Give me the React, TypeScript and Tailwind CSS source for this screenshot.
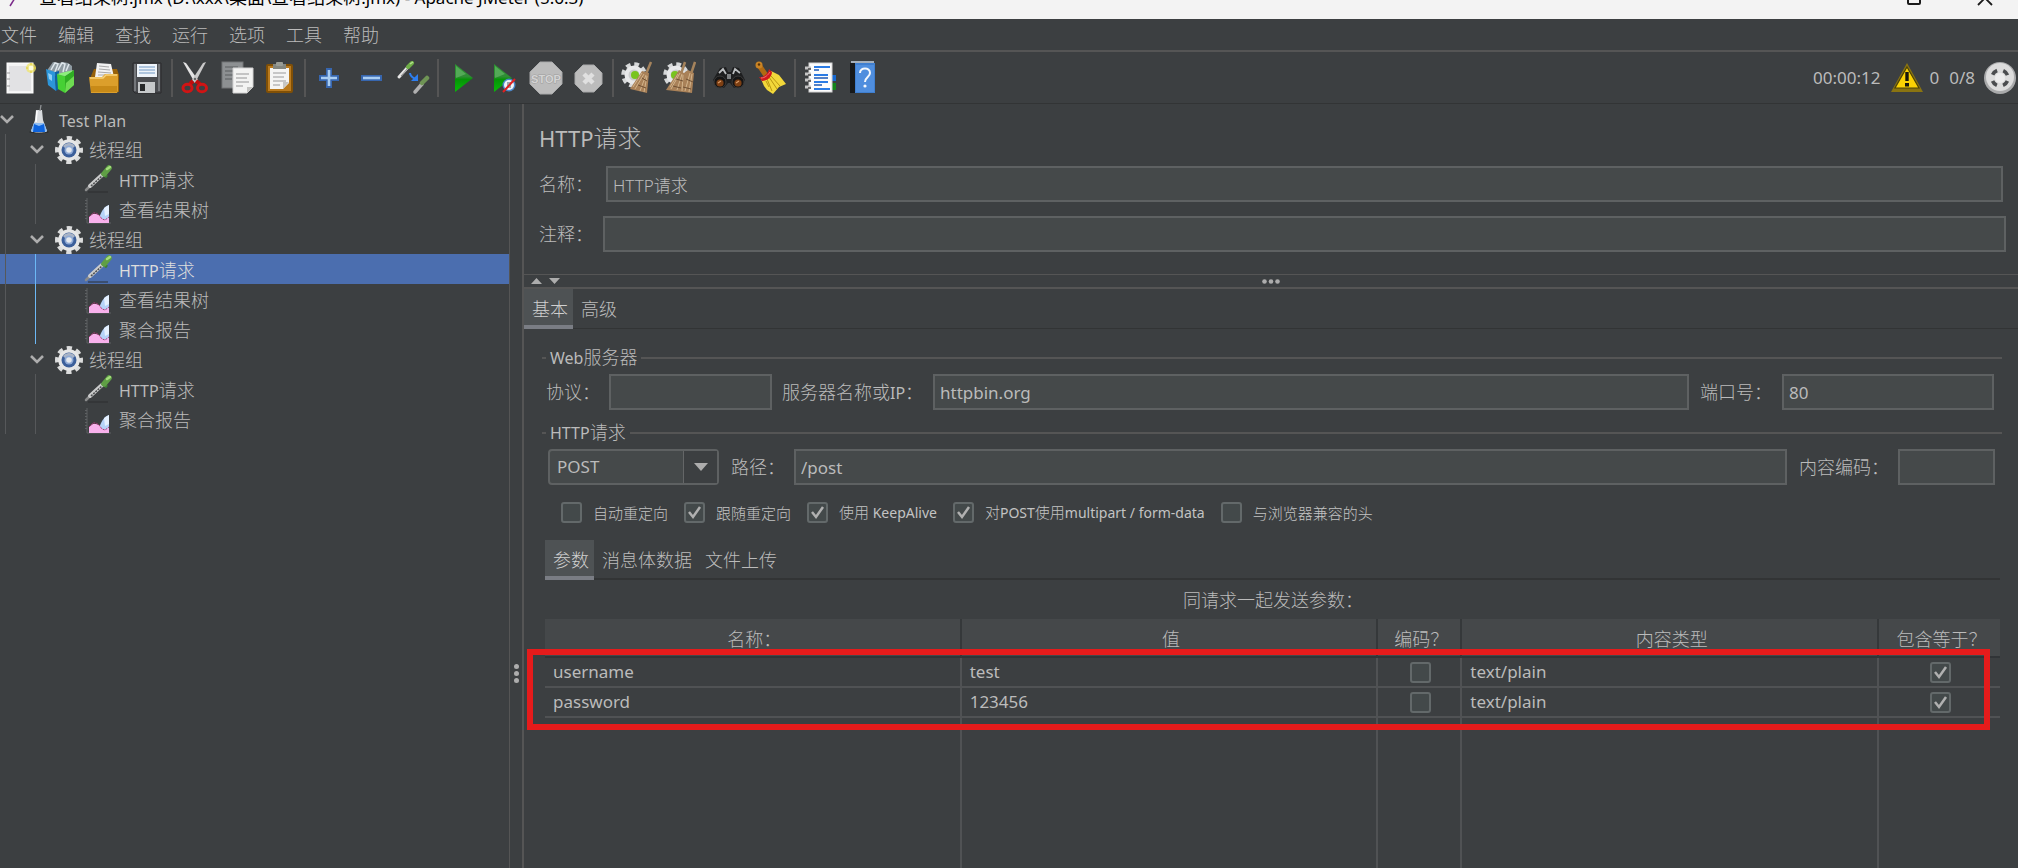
import { Fragment, ReactNode, useState } from 'react';
import clsx from 'clsx';

/* ---------- Toolbar icons ---------- */

function Svg({ children, className = 'w-[34px] h-[34px]', box = '0 0 34 34' }: { children: ReactNode; className?: string; box?: string }) {
  return (
    <svg viewBox={box} className={clsx('shrink-0', className)} fill="none" aria-hidden="true">
      {children}
    </svg>
  );
}

function NewIcon() {
  return (
    <Svg>
      <rect x="3" y="2" width="26" height="30" fill="#f4f4f4" stroke="#ffffff" />
      <rect x="5" y="5" width="22" height="25" fill="#e2e2e4" />
      <path d="M3 12h3M3 18h3M3 25h3" stroke="#9b9b9b" strokeWidth="1" />
      <circle cx="27" cy="7" r="5" fill="#f0e56a" opacity=".75" />
      <path d="M27 2v10M22 7h10" stroke="#e3cf35" strokeWidth="1" />
      <circle cx="27" cy="7" r="2.500" fill="#fffde0" />
    </Svg>
  );
}

function TemplatesIcon() {
  return (
    <Svg>
      <path d="M2 8l5-7 6 1 4-1 5 1 4 3v11L2 14z" fill="#8f9ba2" />
      <path d="M5 9l4-7 3 1-3 8M12 9l4-7 3 1-2 8M20 10l3-7" stroke="#dfe7ec" strokeWidth="1.500" />
      <path d="M0 8l9 3 1 19-8-6z" fill="#2c96da" />
      <path d="M2 12l4 2v6l-3-2z" fill="#8fd0f7" />
      <path d="M9 11l4-1v18l-3 2z" fill="#0e62a3" />
      <path d="M11 13l8 2v17l-7-4z" fill="#46d034" />
      <path d="M19 15l9-6v15l-9 8z" fill="#2fae23" />
      <path d="M20 22l8-7v9l-9 8z" fill="#6edc52" />
      <path d="M11 13l8-2 9-2-9 6z" fill="#8df07c" />
    </Svg>
  );
}

function OpenIcon() {
  return (
    <Svg>
      <path d="M3 15l3-7h23l2 6v17H3z" fill="#96610a" />
      <path d="M7 16L9 2l14 1 3 13z" fill="#f2f2f2" />
      <path d="M11 5l10 1M11 8l11 1M10 11l13 1M10 14h14" stroke="#a8a8a8" strokeWidth="1.200" />
      <path d="M1 16h13l3-3h13v17l-1 2H3z" fill="#dc9f2b" />
      <path d="M2 17h13l3-3h11" stroke="#f7d37a" strokeWidth="1.400" />
      <path d="M3 25h26v6H3z" fill="#c88a17" />
    </Svg>
  );
}

function SaveIcon() {
  return (
    <Svg>
      <path d="M3 2h28v30H5l-2-2z" fill="#4a4c50" stroke="#2a2b2d" />
      <path d="M4 3h2v27H4zM28 3h2v27h-2z" fill="#74777b" />
      <rect x="7" y="3" width="20" height="13" fill="#eef4fa" />
      <path d="M9 6h16M9 9h16M9 12h16" stroke="#9ab6d6" strokeWidth="1.600" />
      <rect x="8" y="21" width="17" height="11" fill="#c6c9cb" />
      <rect x="10" y="23" width="5" height="7" fill="#26282a" />
    </Svg>
  );
}

function CutIcon() {
  return (
    <Svg>
      <path d="M4 1l3 1 12 17-3 3z" fill="#e3e3e3" />
      <path d="M27 1l-3 1-11 17 3 3z" fill="#c9c9c9" />
      <path d="M14 20l-3 3M17 20l4 3" stroke="#c00c0c" strokeWidth="4" />
      <ellipse cx="8.500" cy="27" rx="4.500" ry="3.800" stroke="#d01414" strokeWidth="3" />
      <ellipse cx="23" cy="27" rx="4.500" ry="3.800" stroke="#d01414" strokeWidth="3" />
      <circle cx="16" cy="18" r="1.200" fill="#666" />
    </Svg>
  );
}

function CopyIcon() {
  return (
    <Svg>
      <rect x="1" y="1" width="21" height="26" fill="#8d9092" stroke="#727577" />
      <path d="M4 6h13M4 10h13M4 14h9M4 18h7" stroke="#6b6e70" strokeWidth="1.600" />
      <path d="M12 7h20v19l-6 6H12z" fill="#f3f3f2" stroke="#d2d2d2" />
      <path d="M15 13h13M15 17h11M15 21h13M15 25h7" stroke="#b5b5b5" strokeWidth="1.600" />
      <path d="M32 26h-6v6z" fill="#c2c2c0" />
    </Svg>
  );
}

function PasteIcon() {
  return (
    <Svg>
      <rect x="4" y="4" width="25" height="27" rx="1" fill="#b97a1e" stroke="#815006" strokeWidth="2" />
      <path d="M7 7h19v15l-6 6H7z" fill="#f5f5f4" />
      <path d="M10 12h13M10 16h11M10 20h13M10 24h7" stroke="#b8b8b8" strokeWidth="1.500" />
      <path d="M26 21h-6v7z" fill="#c6c6c4" />
      <rect x="10" y="3" width="13" height="5" fill="#83867f" />
      <rect x="13" y="1" width="7" height="4" rx="1" fill="#999c95" />
    </Svg>
  );
}

function PlusIcon() {
  return (
    <Svg>
      <path d="M14 7h6v7h7v6h-7v7h-6v-7H7v-6h7z" fill="#3766ae" />
      <path d="M17 9v16M9 17h16" stroke="#a9cdf2" strokeWidth="2.600" />
    </Svg>
  );
}

function MinusIcon() {
  return (
    <Svg>
      <path d="M7 14h21v6H7z" fill="#3766ae" />
      <path d="M9 17h17" stroke="#a9cdf2" strokeWidth="2.600" />
    </Svg>
  );
}

function ToggleIcon() {
  return (
    <Svg>
      <path d="M3 16L12 6" stroke="#e6e6e6" strokeWidth="3" strokeLinecap="round" />
      <path d="M5 15L12 7" stroke="#888" strokeWidth="1" />
      <path d="M12 6l4-4" stroke="#6fae47" strokeWidth="4" strokeLinecap="round" />
      <path d="M14 3l3-2" stroke="#b4e08f" strokeWidth="1.500" />
      <path d="M14 12c0 3 2 4 5 6" stroke="#2d7ef0" strokeWidth="2" />
      <path d="M22 13v7h-7z" fill="#2d7ef0" />
      <path d="M19 31l7-8" stroke="#b0b0b0" strokeWidth="3.500" strokeLinecap="round" />
      <path d="M26 22l5-5" stroke="#6f9455" strokeWidth="4.500" strokeLinecap="round" />
    </Svg>
  );
}

function RunShape() {
  return (
    <>
      <defs>
        <linearGradient id="runFill" x1="0" y1="0" x2="0" y2="1">
          <stop offset="0" stopColor="#2c9130" />
          <stop offset=".45" stopColor="#2f8d35" />
          <stop offset=".55" stopColor="#069307" />
          <stop offset="1" stopColor="#08bb08" />
        </linearGradient>
      </defs>
      <path d="M10 3l18 14-18 14z" fill="url(#runFill)" />
      <path d="M11 5l10 8-10 4z" fill="#8bd18d" opacity=".4" />
    </>
  );
}

function RunIcon() {
  return (
    <Svg>
      <RunShape />
    </Svg>
  );
}

function RunNoPauseIcon() {
  return (
    <Svg>
      <g transform="translate(-3 0)">
        <RunShape />
      </g>
      <circle cx="22" cy="24" r="6.500" fill="#4b86c8" />
      <circle cx="22" cy="24" r="5" fill="#eef3f8" />
      <path d="M20 21h4v6h-4z" fill="#9aa4ad" />
      <path d="M16 31l12-13" stroke="#e02020" strokeWidth="2" />
    </Svg>
  );
}

function StopIcon() {
  return (
    <Svg>
      <path d="M11 1h12l10 10v12L23 33H11L1 23V11z" fill="#bcbcbc" stroke="#a8a9aa" />
      <text x="17" y="22" textAnchor="middle" fontSize="11" fontWeight="700" fontFamily="Liberation Sans" fill="#d4d4d4" stroke="#9c9c9c" strokeWidth="1" paintOrder="stroke">
        STOP
      </text>
    </Svg>
  );
}

function ShutdownIcon() {
  return (
    <Svg>
      <path d="M12 4h11l8 8v11l-8 8H12l-8-8V12z" fill="#bcbcbc" stroke="#a8a9aa" />
      <path d="M13 13l9 9M22 13l-9 9" stroke="#e0e0e0" strokeWidth="4.500" />
    </Svg>
  );
}

function MiniGear({ dot }: { dot: number }) {
  return (
    <>
      <circle cx="14" cy="14" r="10.500" stroke="#d6d8d9" strokeWidth="4.500" strokeDasharray="4.600 3.640" />
      <circle cx="14" cy="14" r="9.500" fill="#e8e9ea" />
      <circle cx="14" cy="14" r="5.500" fill="#c9cbcc" />
      <circle cx={dot} cy="14" r="4" fill="#79c41f" />
    </>
  );
}

function ClearIcon() {
  return (
    <Svg>
      <MiniGear dot={15} />
      <path d="M31 1l-5 12" stroke="#a5835c" strokeWidth="2.500" />
      <path d="M22 10l7 2-2 20-17-4z" fill="#a98158" />
      <path d="M24 13l-9 15M26 14l-6 16M27 15l-3 16M22 12l-9 14" stroke="#d2b48c" strokeWidth="1" />
      <path d="M22 17l5 3M18 24l8 3" stroke="#6f5033" strokeWidth="1" />
    </Svg>
  );
}

function ClearAllIcon() {
  return (
    <Svg>
      <MiniGear dot={13} />
      <path d="M23 1l-4 12M33 1l-4 12" stroke="#a5835c" strokeWidth="2.500" />
      <path d="M17 9l5 3 4-3 6 3-2 20-26-3z" fill="#a98158" />
      <path d="M18 12l-9 16M20 13l-5 16M21 14l-1 16M28 12l-5 18M30 13l-3 18M16 13l-8 13" stroke="#d2b48c" strokeWidth="1" />
      <path d="M14 18l7 2M24 18l7 3M11 25l8 2M21 26l8 2" stroke="#6f5033" strokeWidth="1" />
    </Svg>
  );
}

function SearchIcon() {
  return (
    <Svg>
      <path d="M2 19L9 7l6-1 2 5h3l2-5 6 1 6 12-4 6-7 2-4-5h-2l-4 5-7-2z" fill="#1d1e1f" />
      <path d="M8 12l4-4 3 5M22 13l2-5 5 4" stroke="#b9bcbe" strokeWidth="1.800" />
      <circle cx="9" cy="21" r="6" fill="#151515" stroke="#3a3a3a" />
      <circle cx="27" cy="21" r="6" fill="#151515" stroke="#3a3a3a" />
      <circle cx="9" cy="22" r="3.600" fill="#7d3f13" />
      <circle cx="27" cy="22" r="3.600" fill="#7d3f13" />
      <path d="M7 22l3-2M25 22l3-2" stroke="#d99b68" strokeWidth="1.200" />
      <path d="M16 13h4v5h-4z" fill="#7d8082" />
    </Svg>
  );
}

function BroomIcon() {
  return (
    <Svg>
      <path d="M6 4l6 9" stroke="#b06a12" strokeWidth="5" strokeLinecap="round" />
      <circle cx="6" cy="4" r="3.500" fill="#c98324" />
      <circle cx="6" cy="3.500" r="1.200" fill="#5a3303" />
      <path d="M8 18l10-8 8 4 7 9-7 3-6 7-6-4-3-4z" fill="#f2d83a" />
      <path d="M14 18l5 12M18 15l9 10M13 20l3 6M16 16l8 12" stroke="#b89611" strokeWidth="1" />
      <path d="M6 16c4 1 9-3 10-8l3 3c0 5-5 9-10 9z" fill="#d0191c" />
      <path d="M8 17c4 0 7-3 9-6" stroke="#f07070" strokeWidth="1" />
    </Svg>
  );
}

function FunctionHelperIcon() {
  return (
    <Svg>
      <path d="M28 14h6v6h-6z" fill="#1769d2" />
      <path d="M28 22h6v7h-6z" fill="#12851b" />
      <rect x="7" y="2" width="23" height="29" fill="#fcfcfc" stroke="#d3d3d3" />
      <path d="M3 7h6M3 13h6M3 19h6M3 26h6" stroke="#c5c5c5" strokeWidth="3" />
      <path d="M6 8h3M6 14h3M6 20h3M6 27h3" stroke="#444" strokeWidth="1.500" />
      <path d="M12 6h16M12 14h14M12 21h14M12 28h16" stroke="#2b7be4" strokeWidth="2" />
      <path d="M12 9h5M12 17h14M12 24h8" stroke="#1c58b4" strokeWidth="1.500" />
    </Svg>
  );
}

function HelpIcon() {
  return (
    <Svg>
      <path d="M7 2h24v30H7z" fill="#3f7fd0" />
      <path d="M12 4h18v27H12z" fill="#4f8ede" />
      <path d="M6 2h5v30H6z" fill="#17191b" />
      <path d="M7 1h23" stroke="#c9d7e6" strokeWidth="1.500" />
      <path d="M16 12c0-6 10-6 10 0 0 4-5 4-5 9" stroke="#f4f8fd" strokeWidth="2" />
      <circle cx="21" cy="25" r="1.600" fill="#f4f8fd" />
    </Svg>
  );
}

function WarningIcon() {
  return (
    <Svg>
      <path d="M17 2l16 29H1z" fill="#8a7411" />
      <path d="M17 6l12 21H5z" fill="#fbd204" stroke="#4c4208" strokeWidth="1.200" />
      <path d="M17 11v9" stroke="#17160c" strokeWidth="3.400" />
      <rect x="15" y="22" width="4" height="3.500" fill="#17160c" />
    </Svg>
  );
}

function StatusIcon() {
  return (
    <Svg>
      <circle cx="17" cy="17" r="16" fill="#a9aaab" />
      <circle cx="17" cy="16" r="14" fill="#dcdcdc" />
      {/* four dashes, one on each diagonal */}
      <circle cx="17" cy="17" r="8" stroke="#4a4c4e" strokeWidth="3.600" strokeDasharray="6.283 6.283" strokeDashoffset="-3.100" />
      <circle cx="17" cy="17" r="5" fill="#ececec" />
    </Svg>
  );
}

/* ---------- Tree icons ---------- */

function FlaskIcon() {
  return (
    <Svg box="0 0 30 30" className="w-[30px] h-[30px]">
      <ellipse cx="15" cy="27" rx="10" ry="1.500" fill="#2b2d2f" />
      <path d="M12 5h6l1 10 4 11c0 2-16 2-16 0l4-11z" fill="#d9dcdf" />
      <path d="M10 18h10l3 8c0 1.500-16 1.500-16 0z" fill="#8fbdf2" />
      <path d="M10 19l5 2 5-2 1 8H9z" fill="#0d63dd" />
      <path d="M13 6l-1 11" stroke="#fff" strokeWidth="1.500" />
      <path d="M17 0l-1 6" stroke="#8f9294" strokeWidth="1.300" />
    </Svg>
  );
}

function GearIcon() {
  return (
    <Svg box="0 0 30 30" className="w-[30px] h-[30px]">
      <circle cx="15" cy="15" r="11.500" stroke="#dcdddd" strokeWidth="5" strokeDasharray="5 4.032" strokeDashoffset="2.500" />
      <circle cx="15" cy="15" r="10.800" fill="#e6e6e6" />
      <circle cx="15" cy="15" r="7.500" fill="#3c5f9a" />
      <path d="M9 11a7.500 7.500 0 0 1 12 0l-3 3h-6z" fill="#a9b4c6" />
      <circle cx="15" cy="15" r="4.500" fill="#8fa9d4" />
      <circle cx="15" cy="15" r="2.800" fill="#e4e8ee" />
    </Svg>
  );
}

function DropperIcon() {
  return (
    <Svg box="0 0 30 30" className="w-[30px] h-[30px]">
      <path d="M4 27h20" stroke="#2c2e30" />
      <path d="M2 25l5-5" stroke="#8a8b8b" strokeWidth="2.500" strokeLinecap="round" />
      <path d="M6 21L18 10" stroke="#cbcccc" strokeWidth="4" strokeLinecap="round" />
      <path d="M7 21L18 11" stroke="#4d4f50" strokeWidth="1.500" strokeDasharray="2 1" />
      <path d="M18 8l5 4" stroke="#3e7d34" strokeWidth="3" />
      <path d="M20 9l5-6" stroke="#5f9f45" strokeWidth="5.500" strokeLinecap="round" />
      <path d="M23 4l3-2" stroke="#a4dc7c" strokeWidth="2.500" strokeLinecap="round" />
    </Svg>
  );
}

function ChartIcon() {
  return (
    <Svg box="0 0 30 30" className="w-[30px] h-[30px]">
      <path d="M3 3v25h24" stroke="#5d6062" strokeWidth="1" />
      <path d="M2 5v20" stroke="#5d6062" strokeWidth="2" strokeDasharray="1 2" />
      <path d="M14 27c2-9 6-16 11-17v17z" fill="#b6d3f8" />
      <path d="M20 13l5-3v9l-4 2z" fill="#e6f1ff" />
      <path d="M5 28v-6l4-3h3l3 1 3 4 3 1 4-2v5z" fill="#f8b1ec" />
      <path d="M5 22l4-4h3l3 2 3 4 3 1 4-3" stroke="#b03a78" strokeWidth="1" strokeDasharray="2 1" />
    </Svg>
  );
}

/* ---------- Small shared parts ---------- */

const latinSize = {
  sm: 'text-[14px]',
  base: 'text-[16px]',
  md: 'text-[17px]',
  lg: 'text-[22px]',
};

// Latin runs are set a little smaller than the Chinese around them
function Mixed({ text, size = 'base' }: { text: string; size?: keyof typeof latinSize }) {
  return (
    <>
      {text.split(/([\x20-\x7e]+)/).map((part, i) =>
        i % 2 === 1 ? (
          <span key={i} className={clsx('whitespace-pre font-normal', latinSize[size])}>
            {part}
          </span>
        ) : (
          <Fragment key={i}>{part}</Fragment>
        )
      )}
    </>
  );
}

function CheckBox({ id, label, checked }: { id?: string; label?: string; checked: boolean }) {
  const [on, setOn] = useState(checked);
  return (
    <span className="relative inline-block w-[21px] h-[21px] shrink-0 align-middle">
      <input
        id={id}
        aria-label={label}
        type="checkbox"
        checked={on}
        onChange={() => setOn(!on)}
        className="block appearance-none w-full h-full bg-[#43494a] border-2 border-[#63696a] rounded-[3px]"
      />
      {on && (
        <svg viewBox="0 0 21 21" className="absolute inset-0 pointer-events-none" fill="none" aria-hidden="true">
          <path d="M5 10l4 5 7-10" stroke="#b0b0b0" strokeWidth="2.500" />
        </svg>
      )}
    </span>
  );
}

function Tabs({ items, line }: { items: string[]; line: string }) {
  const [active, setActive] = useState(0);
  return (
    <div role="tablist" className={clsx('flex h-10', line)}>
      {items.map((item, i) => (
        <button
          key={item}
          role="tab"
          aria-selected={i === active}
          onClick={() => setActive(i)}
          className={clsx(
            'h-10 pl-2 pr-[5px] pt-1 border-b-4 text-[18px] leading-6',
            i === active ? 'bg-[#4e5254] border-[#7a7d84] text-[#d0d0d0]' : 'border-transparent'
          )}
        >
          {item}
        </button>
      ))}
    </div>
  );
}

function GroupTitle({ text }: { text: string }) {
  return (
    <div className="flex items-center pl-[18px] pr-4 text-[18px] leading-6">
      <span className="w-1 h-0.5 bg-[#555555] mr-1" />
      <h2>
        <Mixed text={text} />
      </h2>
      <span className="flex-1 h-0.5 bg-[#555555] ml-1" />
    </div>
  );
}

const field = 'h-9 min-w-0 bg-[#45494a] border-2 border-[#5e6162] px-[5px] outline-none focus:border-[#466d94]';

/* ---------- Test plan tree ---------- */

type TreeRow = { name: string; depth: number; icon: () => ReactNode; open?: boolean; selected?: boolean; active?: boolean };

const treeRows: TreeRow[] = [
  { name: 'Test Plan', depth: 0, icon: FlaskIcon, open: true },
  { name: '线程组', depth: 1, icon: GearIcon, open: true },
  { name: 'HTTP请求', depth: 2, icon: DropperIcon },
  { name: '查看结果树', depth: 2, icon: ChartIcon },
  { name: '线程组', depth: 1, icon: GearIcon, open: true },
  { name: 'HTTP请求', depth: 2, icon: DropperIcon, selected: true, active: true },
  { name: '查看结果树', depth: 2, icon: ChartIcon, active: true },
  { name: '聚合报告', depth: 2, icon: ChartIcon, active: true },
  { name: '线程组', depth: 1, icon: GearIcon, open: true },
  { name: 'HTTP请求', depth: 2, icon: DropperIcon },
  { name: '聚合报告', depth: 2, icon: ChartIcon },
];

function Tree() {
  return (
    <ul className="w-[510px] shrink-0 border-r border-[#555555]">
      {treeRows.map((row, i) => {
        const Icon = row.icon;
        return (
          <li key={i} className={clsx('flex h-[30px]', row.selected && 'bg-[#4b6eaf] text-[#dddddd]')}>
            {Array.from({ length: row.depth }, (_, level) => (
              <span key={level} className="w-[30px] h-full pl-[5px] shrink-0">
                <span className={clsx('block h-full border-l', row.active && level === 1 ? 'border-[#6cb8f5]' : 'border-[#56585a]')} />
              </span>
            ))}
            <div className="flex items-center pt-0.5">
              <span className="w-6 shrink-0">
                {row.open && (
                  <svg viewBox="0 0 14 10" className="w-[14px] h-[10px]" fill="none" aria-hidden="true">
                    <path d="M1 1l6 6 6-6" stroke="#adadad" strokeWidth="2.600" />
                  </svg>
                )}
              </span>
              <Icon />
              <span className="pl-[5px] leading-[30px]">
                <Mixed text={row.name} />
              </span>
            </div>
          </li>
        );
      })}
    </ul>
  );
}

/* ---------- Header bars ---------- */

const menus = ['文件', '编辑', '查找', '运行', '选项', '工具', '帮助'];

const toolGroups: { label: string; icon: () => ReactNode }[][] = [
  [
    { label: '新建', icon: NewIcon },
    { label: '模板', icon: TemplatesIcon },
    { label: '打开', icon: OpenIcon },
    { label: '保存', icon: SaveIcon },
  ],
  [
    { label: '剪切', icon: CutIcon },
    { label: '复制', icon: CopyIcon },
    { label: '粘贴', icon: PasteIcon },
  ],
  [
    { label: '全部展开', icon: PlusIcon },
    { label: '全部折叠', icon: MinusIcon },
    { label: '切换', icon: ToggleIcon },
  ],
  [
    { label: '启动', icon: RunIcon },
    { label: '不停顿开始', icon: RunNoPauseIcon },
    { label: '停止', icon: StopIcon },
    { label: '关闭', icon: ShutdownIcon },
  ],
  [
    { label: '清除', icon: ClearIcon },
    { label: '清除全部', icon: ClearAllIcon },
  ],
  [
    { label: '查找', icon: SearchIcon },
    { label: '重置查找', icon: BroomIcon },
  ],
  [
    { label: '函数助手对话框', icon: FunctionHelperIcon },
    { label: '帮助', icon: HelpIcon },
  ],
];

function TitleBar() {
  return (
    <header className="h-[19px] shrink-0 overflow-hidden bg-[#f3f3f3] text-black">
      <div className="-mt-6 h-[43px] flex items-center pl-2 pr-[25px]">
        <svg viewBox="0 0 20 34" className="w-5 h-[34px]" fill="none" aria-hidden="true">
          <path d="M5 18C7 12 11 7 18 1c0 8-5 13-11 17" fill="#b0348f" />
          <path d="M2 25l5-8" stroke="#7a2a8a" strokeWidth="1.500" />
        </svg>
        <h1 className="flex-1 pl-[11px] text-[18px] leading-6 font-normal">
          <Mixed text="查看结果树.jmx (D:\xxx\桌面\查看结果树.jmx) - Apache JMeter (5.6.3)" size="md" />
        </h1>
        <button aria-label="最大化" className="w-[14px] h-[14px] border-2 border-[#1a1a1a] rounded-[2px]" />
        <button aria-label="关闭" className="ml-14">
          <svg viewBox="0 0 16 16" className="w-4 h-4" fill="none" aria-hidden="true">
            <path d="M1 1l14 14M15 1L1 15" stroke="#1a1a1a" strokeWidth="1.800" />
          </svg>
        </button>
      </div>
    </header>
  );
}

function Toolbar() {
  return (
    <div className="flex items-center h-[52px] shrink-0 border-b border-[#323435]">
      {toolGroups.map((group, g) => (
        <Fragment key={g}>
          {g > 0 && <span className="w-0.5 h-[38px] ml-[3px] mr-0.5 bg-[#555555]" />}
          {group.map(({ label, icon: Icon }) => (
            <button key={label} aria-label={label} className="w-[42px] h-[42px] flex items-center justify-center hover:bg-[#4c5052]">
              <Icon />
            </button>
          ))}
        </Fragment>
      ))}
      <div className="ml-auto flex items-center text-[17px] leading-6 font-normal pr-px">
        <span>00:00:12</span>
        <span className="ml-2.5 mr-[5px]">
          <WarningIcon />
        </span>
        <span>0</span>
        <span className="ml-2.5 mr-2">0/8</span>
        <StatusIcon />
      </div>
    </div>
  );
}

/* ---------- HTTP sampler form ---------- */

const options = [
  { id: 'auto-redirect', label: '自动重定向', checked: false },
  { id: 'follow-redirect', label: '跟随重定向', checked: true },
  { id: 'keep-alive', label: '使用 KeepAlive', checked: true },
  { id: 'multipart', label: '对POST使用multipart / form-data', checked: true },
  { id: 'browser-headers', label: '与浏览器兼容的头', checked: false },
];

const params = [
  { name: 'username', value: 'test', encode: false, type: 'text/plain', equals: true },
  { name: 'password', value: '123456', encode: false, type: 'text/plain', equals: true },
];

function ParamsTable() {
  const cell = 'border-r-2 border-b-2 border-[#505254] px-2 py-0';
  const empty = 'border-r-2 border-[#505254] p-0';
  const head = 'border-r-2 border-b-2 border-r-[#35383a] border-b-[#313437] p-0 pt-0.5 pl-1 font-light';
  return (
    <div className="flex-1 min-h-0 relative mt-[7px] pl-[21px] pr-[18px]">
      <table className="w-full h-full table-fixed border-separate border-spacing-0 text-left text-[17px] font-normal">
        <colgroup>
          <col />
          <col />
          <col className="w-[84px]" />
          <col />
          <col className="w-[121px]" />
        </colgroup>
        <thead>
          <tr className="h-[39px] bg-[#45484a] text-center text-[18px] leading-6">
            <th className={head}>名称：</th>
            <th className={head}>值</th>
            <th className={head}>编码？</th>
            <th className={head}>内容类型</th>
            <th className="border-b-2 border-b-[#313437] p-0 pt-0.5 pl-1 font-light">包含等于？</th>
          </tr>
        </thead>
        <tbody>
          {params.map((p) => (
            <tr key={p.name} className="h-[30px] leading-6">
              <td className={cell}>{p.name}</td>
              <td className={cell}>{p.value}</td>
              <td className="border-r-2 border-b-2 border-[#505254] p-0 pl-0.5 text-center leading-none">
                <CheckBox label={p.name + ' 编码？'} checked={p.encode} />
              </td>
              <td className={cell}>{p.type}</td>
              <td className="border-b-2 border-[#505254] p-0 pl-0.5 text-center leading-none">
                <CheckBox label={p.name + ' 包含等于？'} checked={p.equals} />
              </td>
            </tr>
          ))}
          <tr>
            <td className={empty} />
            <td className={empty} />
            <td className={empty} />
            <td className={empty} />
            <td />
          </tr>
        </tbody>
      </table>
      {/* highlight around the parameter rows */}
      <div className="absolute left-[3px] right-[28px] top-[30px] h-[81px] border-[6px] border-[#e61b1b] pointer-events-none" />
    </div>
  );
}

function SamplerPanel() {
  return (
    <main className="flex-1 min-w-0 flex flex-col border-l-2 border-[#555555] text-[18px] leading-6">
      <h1 className="pt-[18px] pl-[15px] text-[24px] leading-8">
        <Mixed text="HTTP请求" size="lg" />
      </h1>
      <div className="flex items-center mt-3 pl-[15px] pr-[15px]">
        <label htmlFor="name" className="w-[67px] shrink-0">名称：</label>
        <input id="name" defaultValue="HTTP请求" className={clsx(field, 'flex-1 text-[17px]')} />
      </div>
      <div className="flex items-center mt-[14px] pl-[15px] pr-3">
        <label htmlFor="comment" className="w-16 shrink-0">注释：</label>
        <input id="comment" className={clsx(field, 'flex-1')} />
      </div>

      <div className="mt-[22px] h-[15px] shrink-0 border-t border-b-2 border-[#555555] grid grid-cols-3 items-center">
        <svg viewBox="0 0 30 6" className="w-[30px] h-[6px] ml-[7px]" aria-hidden="true">
          <path d="M0 6l5.500-6L11 6zM18 0h11l-5.500 6z" fill="#adadad" />
        </svg>
        <svg viewBox="0 0 18 5" className="w-[18px] h-[5px] justify-self-center" aria-hidden="true">
          <circle cx="2.500" cy="2.500" r="2.300" fill="#adadad" />
          <circle cx="9" cy="2.500" r="2.300" fill="#adadad" />
          <circle cx="15.500" cy="2.500" r="2.300" fill="#adadad" />
        </svg>
      </div>

      <Tabs items={['基本', '高级']} line="shadow-[inset_0_-1px_#323435]" />

      <div className="mt-4">
        <GroupTitle text="Web服务器" />
        <div className="flex items-center mt-1 pl-[22px] pr-6">
          <label htmlFor="protocol" className="w-[63px] shrink-0">协议：</label>
          <input id="protocol" className={clsx(field, 'w-[163px]')} />
          <label htmlFor="server" className="w-[151px] ml-2.5 shrink-0">
            <Mixed text="服务器名称或IP：" />
          </label>
          <input id="server" defaultValue="httpbin.org" className={clsx(field, 'flex-1 text-[17px] font-normal')} />
          <label htmlFor="port" className="w-[82px] ml-[11px] shrink-0">端口号：</label>
          <input id="port" defaultValue="80" className={clsx(field, 'w-[212px] text-[17px] font-normal')} />
        </div>
      </div>

      <div className="mt-2.5">
        <GroupTitle text="HTTP请求" />
        <div className="flex items-center mt-1 pl-6 pr-[23px]">
          <div className="relative w-[171px] h-9 shrink-0">
            <select
              aria-label="方法"
              defaultValue="POST"
              className="appearance-none w-full h-full pl-[7px] bg-[#45494a] border-2 border-[#5e6162] rounded-[4px] text-[17px] leading-6 font-normal outline-none"
            >
              <option>GET</option>
              <option>POST</option>
              <option>PUT</option>
              <option>DELETE</option>
            </select>
            <span className="absolute right-0.5 inset-y-0.5 w-[34px] bg-[#3c3f41] border-l border-[#646667] flex items-center justify-center pointer-events-none">
              <svg viewBox="0 0 14 8" className="w-[14px] h-2" aria-hidden="true">
                <path d="M0 0h14L7 8z" fill="#adadad" />
              </svg>
            </span>
          </div>
          <label htmlFor="path" className="w-[63px] ml-3 shrink-0">路径：</label>
          <input id="path" defaultValue="/post" className={clsx(field, 'flex-1 text-[17px] font-normal')} />
          <label htmlFor="encoding" className="w-[99px] ml-3 shrink-0">内容编码：</label>
          <input id="encoding" className={clsx(field, 'w-[97px]')} />
        </div>
      </div>

      <div className="flex items-center gap-4 mt-[17px] pl-[37px] h-[21px] shrink-0">
        {options.map((o) => (
          <div key={o.id} className="flex items-center gap-[11px] text-[15px] text-[#c3c3c3]">
            <CheckBox id={o.id} checked={o.checked} />
            <label htmlFor={o.id}>
              <Mixed text={o.label} size="sm" />
            </label>
          </div>
        ))}
      </div>

      <div className="mt-[17px] pl-[21px] pr-[18px]">
        <Tabs items={['参数', '消息体数据', '文件上传']} line="shadow-[inset_0_-2px_#323435]" />
      </div>
      <p className="mt-2 pl-1 text-center">同请求一起发送参数：</p>
      <ParamsTable />
    </main>
  );
}

export default function App() {
  return (
    <div className="h-screen flex flex-col overflow-hidden bg-[#3c3f41] text-[#bbbbbb] text-[18px] font-light font-['Noto_Sans','Noto_Sans_CJK_SC',sans-serif]">
      <TitleBar />
      <nav className="flex items-center gap-[21px] h-[33px] shrink-0 pl-px border-b-2 border-[#555555] leading-6">
        {menus.map((m) => (
          <button key={m}>{m}</button>
        ))}
      </nav>
      <Toolbar />
      <div className="flex flex-1 min-h-0">
        <Tree />
        {/* split pane handle */}
        <div className="w-3 shrink-0 pt-[560px] flex flex-col items-center gap-0.5">
          <span className="size-[5px] rounded-full bg-[#adadad]" />
          <span className="size-[5px] rounded-full bg-[#adadad]" />
          <span className="size-[5px] rounded-full bg-[#adadad]" />
        </div>
        <SamplerPanel />
      </div>
    </div>
  );
}
